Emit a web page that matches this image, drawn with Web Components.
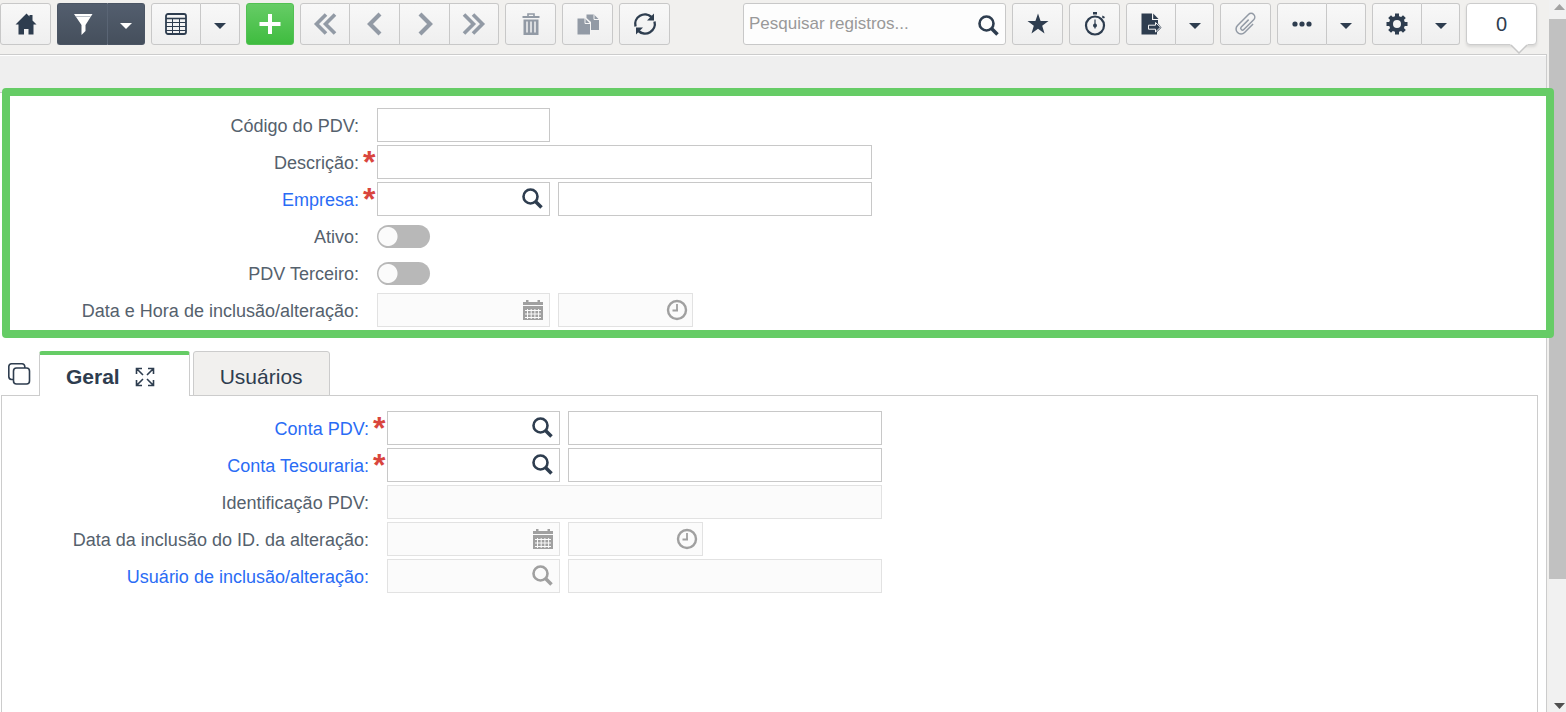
<!DOCTYPE html>
<html lang="pt-BR">
<head>
<meta charset="utf-8">
<title>Cadastro de PDV</title>
<style>
  body {
    margin: 0;
    background: #f1f1f1;
    color: #2e3d4f;
    font-family: "Liberation Sans", Arial, sans-serif;
  }
</style>
</head>
<body>
<app-shell>
  <tool-bar slot="toolbar">
    <tool-button icon="home" label="Início"></tool-button>
    <tool-button icon="filter" label="Filtro" tone="dark" menu></tool-button>
    <tool-button icon="grid" label="Modo grade" menu="wide"></tool-button>
    <tool-button icon="plus" label="Novo" tone="green"></tool-button>
    <nav-buttons></nav-buttons>
    <tool-button icon="trash" label="Excluir" muted></tool-button>
    <tool-button icon="duplicate" label="Duplicar" muted></tool-button>
    <tool-button icon="refresh" label="Atualizar"></tool-button>

    <search-box slot="right"></search-box>
    <tool-button slot="right" icon="star" label="Favoritos"></tool-button>
    <tool-button slot="right" icon="timer" label="Tempo"></tool-button>
    <tool-button slot="right" icon="export" label="Exportar" menu></tool-button>
    <tool-button slot="right" icon="clip" label="Anexos" muted></tool-button>
    <tool-button slot="right" icon="dots" label="Mais opções" menu="wide"></tool-button>
    <tool-button slot="right" icon="gear" label="Configurações" menu></tool-button>
    <count-bubble slot="right">0</count-bubble>
  </tool-bar>

  <form-section highlight>
    <form-row label="Código do PDV:" fields="short"></form-row>
    <form-row label="Descrição:" fields="full" required></form-row>
    <form-row label="Empresa:" fields="search medium" required link></form-row>
    <form-row label="Ativo:" fields="toggle"></form-row>
    <form-row label="PDV Terceiro:" fields="toggle"></form-row>
    <form-row label="Data e Hora de inclusão/alteração:" fields="calendar clock" disabled></form-row>
  </form-section>

  <tab-strip>
    <tab-item active>Geral</tab-item>
    <tab-item>Usuários</tab-item>
  </tab-strip>

  <form-section panel>
    <form-row label="Conta PDV:" fields="search medium" required link></form-row>
    <form-row label="Conta Tesouraria:" fields="search medium" required link></form-row>
    <form-row label="Identificação PDV:" fields="full" disabled></form-row>
    <form-row label="Data da inclusão do ID. da alteração:" fields="calendar clock" disabled></form-row>
    <form-row label="Usuário de inclusão/alteração:" fields="search medium" disabled link></form-row>
  </form-section>

  <scroll-rail slot="rail"></scroll-rail>
</app-shell>

<script>
// All icons share a 22x22 box and take their colour from the text around them
const ICONS = {
  home: '<path d="M11.5 0.5 0.5 11.5H3.5V21.5H9V16H13.5V21.5H18.5V11.5H21.5L17.5 7.5V2H14.5V3.5Z"/>',
  filter: '<path d="M2 1H20.500L13.500 12V18L9.500 22V12Z"/><path d="M4 3.500H18.500" stroke="#b9bfc7" stroke-width="1"/>',
  grid: '<rect x="1" y="1" width="20" height="20" rx="2" fill="none" stroke="currentColor" stroke-width="1.800"/><path d="M1 5.500H21" stroke="currentColor" stroke-width="1.600"/><path d="M1 9.500H21M1 13.500H21M1 17.500H21M7.500 5.500V21M14.500 5.500V21" fill="none" stroke="currentColor" stroke-width="1"/>',
  plus: '<path d="M9 1H13V9H21.500V13H13V21H9V13H0.500V9H9Z"/>',
  first: '<path d="M12 1.500 2.500 11 12 20.500M21 1.500 11.500 11 21 20.500" fill="none" stroke="currentColor" stroke-width="3.600"/>',
  prev: '<path d="M16 1 6 11 16 21" fill="none" stroke="currentColor" stroke-width="4.200"/>',
  next: '<path d="M6 1 16 11 6 21" fill="none" stroke="currentColor" stroke-width="4.200"/>',
  last: '<path d="M1 1.500 10.500 11 1 20.500M10 1.500 19.500 11 10 20.500" fill="none" stroke="currentColor" stroke-width="3.600"/>',
  trash: '<path d="M8 3.500V1H14V3.500" fill="none" stroke="currentColor" stroke-width="1.600"/><path d="M2.500 3H19.500V5H2.500Z"/><path d="M3.500 6.500H18.500V22H3.500Z"/><path d="M7 8.500V19.500M11 8.500V19.500M15 8.500V19.500" stroke="#f4f4f4" stroke-width="1.500"/>',
  duplicate: '<path d="M9.500 1.500H17L22 6.500V17H14V9L9.500 5Z"/><path d="M17 1.500V6.500H22" fill="none" stroke="#f4f4f4"/><path d="M0.500 5.500H8L13 10.500V21.500H0.500Z"/><path d="M8 5V10.500H13.500V22" fill="none" stroke="#f4f4f4"/>',
  refresh: '<path d="M1.500 13.500A9.700 9.700 0 0 1 17.500 4M20.500 8.500A9.700 9.700 0 0 1 4.500 18" fill="none" stroke="currentColor" stroke-width="2.400"/><path d="M20 0.500V7.500H13Z"/><path d="M2 21.500V14.500H9Z"/>',
  search: '<circle cx="8.500" cy="8.500" r="7" fill="none" stroke="currentColor" stroke-width="2.600"/><path d="M13.500 13.500 19.500 19.500" stroke="currentColor" stroke-width="3.600"/>',
  star: '<path d="M11 0.500 13.600 8H21.500L15.200 12.700 17.500 20.500 11 15.800 4.500 20.500 6.800 12.700 0.500 8H8.400Z"/>',
  timer: '<circle cx="11" cy="12.500" r="9" fill="none" stroke="currentColor" stroke-width="2.200"/><path d="M9-1H13V1.500H9ZM18.500 2.500 21 4 20 5.500 18 4.500Z"/><path d="M11 6.500V15.500" stroke="currentColor" stroke-width="1.200"/><circle cx="11" cy="12.500" r="2"/>',
  export: '<path d="M1.500 0.500H12V7H18V10.500L21.500 14.500 17 19V21.500H1.500Z"/><path d="M13.200 0.500 18.500 6H13.200Z"/><path d="M8.500 12.200H15.500V9.500L20.500 14.200 15.500 19V16.200H8.500Z" stroke="#f4f4f4" stroke-width="1"/>',
  clip: '<path transform="rotate(45 11 11)" d="M16 6V18A5 5 0 0 1 6 18V2.500A3.700 3.700 0 0 1 13.400 2.500V16.500A1.800 1.800 0 0 1 9.800 16.500V6" fill="none" stroke="currentColor" stroke-width="1.500"/>',
  dots: '<circle cx="4" cy="11" r="2.600"/><circle cx="11" cy="11" r="2.600"/><circle cx="18" cy="11" r="2.600"/>',
  gear: '<g stroke="currentColor" stroke-width="4"><path d="M11 0.500V5M11 17V21.500M0.500 11H5M17 11H21.500M3.600 3.600 7 7M15 15 18.400 18.400M18.400 3.600 15 7M7 15 3.600 18.400"/></g><circle cx="11" cy="11" r="6" fill="none" stroke="currentColor" stroke-width="4"/>',
  caret: '<path d="M5 10H17L11 16Z"/>',
  calendar: '<path d="M1 3H4V1H6.500V3H15.500V1H18V3H21V6H1Z"/><path d="M1 7H21V21H1Z"/><path d="M3 11.500H19M3 15H19M3 18.500H19M5.500 10V20M9.200 10V20M12.900 10V20M16.600 10V20" stroke="#fbfbfb" stroke-width="1"/>',
  clock: '<circle cx="11" cy="11" r="9" fill="none" stroke="currentColor" stroke-width="2.400"/><path d="M11 5V12.500M6.500 11.500H12" stroke="currentColor" stroke-width="1.800"/>',
  windows: '<path d="M5 16.500H3.500A3 3 0 0 1 0.800 13.500V3.500A3 3 0 0 1 3.500 0.800H14A3 3 0 0 1 16.800 3.500V5" fill="none" stroke="currentColor" stroke-width="1.600"/><rect x="5.500" y="5" width="16" height="16" rx="3" fill="none" stroke="currentColor" stroke-width="1.600"/>',
  expand: '<path d="M2.500 8V2.500H8M14 2.500H19.500V8M19.500 14V19.500H14M8 19.500H2.500V14M3 3 9 9M19 3 13 9M19 19 13 13M3 19 9 13" fill="none" stroke="currentColor" stroke-width="1.600"/>'
};

function icon (name) {
  return `<svg width="22" height="22" viewBox="0 0 22 22" fill="currentColor" overflow="visible" aria-hidden="true">${ICONS[name]}</svg>`;
}

class AppShell extends HTMLElement {
  constructor () {
    super();
    this.attachShadow({ mode: 'open' }).innerHTML = `
    <style>
      :host {
        display: flex;
        min-height: 100vh;
      }
      .page {
        flex: 1;
        min-width: 0;
        display: flex;
        flex-direction: column;
        background: #f1f0ee;
      }
      main {
        flex: 1;
        display: flex;
        flex-direction: column;
        margin-right: 2px;
        border-top: 1px solid #ccc;
        border-right: 1px solid #ccc;
        background: #fff;
      }
      .band {
        height: 36px;
        margin-top: 1px;
        background: #efefef;
        border-bottom: 1px solid #ccc;
      }
    </style>
    <div class="page">
      <slot name="toolbar"></slot>
      <main>
        <div class="band"></div>
        <slot></slot>
      </main>
    </div>
    <slot name="rail"></slot>`;
  }
}

class ToolBar extends HTMLElement {
  constructor () {
    super();
    this.attachShadow({ mode: 'open' }).innerHTML = `
    <style>
      :host {
        display: flex;
        justify-content: space-between;
        padding: 3px 12px 9px 0;
      }
      div {
        display: flex;
        gap: 6px;
      }
    </style>
    <div><slot></slot></div>
    <div><slot name="right"></slot></div>`;
  }
}

const BUTTON_STYLE = `
  :host {
    display: flex;
    color: #2e3d4f;
  }
  button {
    display: flex;
    align-items: center;
    justify-content: center;
    box-sizing: border-box;
    width: 50px;
    height: 42px;
    padding: 0;
    color: inherit;
    background: linear-gradient(#f8f8f8, #efefef);
    border: 1px solid #c8c8c8;
    cursor: pointer;
  }
  button + button {
    border-left: 0;
  }
  button:first-of-type {
    border-top-left-radius: 3px;
    border-bottom-left-radius: 3px;
  }
  button:last-of-type {
    border-top-right-radius: 3px;
    border-bottom-right-radius: 3px;
  }
`;

class ToolButton extends HTMLElement {
  connectedCallback () {
    const label = this.getAttribute('label');
    const menu = this.hasAttribute('menu')
      ? `<button type="button" class="menu" aria-label="${label}: opções">${icon('caret')}</button>`
      : '';
    this.attachShadow({ mode: 'open' }).innerHTML = `
    <style>
      ${BUTTON_STYLE}
      :host([muted]) { color: #929aa5; }
      :host([tone]) { color: #fff; }
      button:only-of-type { width: 51px; }
      button.menu { width: 38px; }
      :host([menu="wide"]) .menu { width: 39px; }
      :host([tone="dark"]) button {
        background: linear-gradient(#535e6e, #454f5c);
        border-color: #4b5564;
      }
      :host([tone="dark"]) button:first-of-type {
        border-right: 0;
      }
      :host([tone="dark"]) .menu {
        border-left: 1px solid #5a6575;
      }
      :host([tone="green"]) button {
        width: 48px;
        background: linear-gradient(#66cc66, #3fbc3f);
        border-color: #52c152;
      }
    </style>
    <button type="button" aria-label="${label}">${icon(this.getAttribute('icon'))}</button>${menu}`;
  }
}

class NavButtons extends HTMLElement {
  constructor () {
    super();
    this.attachShadow({ mode: 'open' }).innerHTML = `
    <style>
      ${BUTTON_STYLE}
      :host { color: #929aa5; }
      button:last-of-type { width: 49px; }
    </style>
    <button type="button" aria-label="Primeiro">${icon('first')}</button>
    <button type="button" aria-label="Anterior">${icon('prev')}</button>
    <button type="button" aria-label="Próximo">${icon('next')}</button>
    <button type="button" aria-label="Último">${icon('last')}</button>`;
  }
}

class SearchBox extends HTMLElement {
  constructor () {
    super();
    this.attachShadow({ mode: 'open' }).innerHTML = `
    <style>
      :host {
        display: flex;
        align-items: center;
        box-sizing: border-box;
        width: 263px;
        height: 42px;
        padding: 0 5px;
        background: #fdfdfd;
        border: 1px solid #c8c8c8;
        border-radius: 3px;
      }
      input {
        flex: 1;
        min-width: 0;
        padding: 0;
        border: 0;
        outline: 0;
        background: none;
        font: 17px "Liberation Sans", Arial, sans-serif;
      }
      input::placeholder { color: #999; }
      button {
        display: flex;
        padding: 3px 0 0;
        border: 0;
        background: none;
        color: #2e3d4f;
      }
    </style>
    <input type="text" placeholder="Pesquisar registros..." aria-label="Pesquisar registros">
    <button type="button" aria-label="Pesquisar">${icon('search')}</button>`;
  }
}

class CountBubble extends HTMLElement {
  constructor () {
    super();
    this.attachShadow({ mode: 'open' }).innerHTML = `
    <style>
      :host {
        position: relative;
        display: flex;
        align-items: center;
        justify-content: center;
        box-sizing: border-box;
        width: 71px;
        height: 42px;
        font-size: 20px;
        background: #fff;
        border: 1px solid #ccc;
        border-radius: 4px;
        box-shadow: 0 2px 3px rgba(0, 0, 0, 0.1);
      }
      svg {
        position: absolute;
        right: 8px;
        top: 40px;
      }
    </style>
    <slot></slot>
    <svg width="18" height="10" viewBox="0 0 18 10"><path d="M0 0H18L9 9Z" fill="#fff"/><path d="M1 1 9 9 17 1" fill="none" stroke="#c8c8c8" stroke-width="1.500"/></svg>`;
  }
}

class FormSection extends HTMLElement {
  constructor () {
    super();
    this.attachShadow({ mode: 'open' }).innerHTML = `
    <style>
      :host {
        display: flex;
        flex-direction: column;
        gap: 3px;
        background: #fff;
      }
      /* the green frame runs over the band above and the scroll rail */
      :host([highlight]) {
        position: relative;
        margin: -5px -8px 13px 2px;
        padding: 12px 0 3px;
        border: 8px solid #66cc66;
        border-radius: 4px;
      }
      :host([panel]) {
        flex: 1;
        margin: -1px 8px 0 1px;
        padding: 15px 0 0 18px;
        border: 1px solid #ccc;
        border-bottom: 0;
      }
    </style>
    <slot></slot>`;
  }
}

class FormRow extends HTMLElement {
  connectedCallback () {
    const text = this.getAttribute('label');
    const caption = this.hasAttribute('link') ? `<a href="#">${text}</a>` : text;
    const off = this.hasAttribute('disabled') ? 'disabled' : '';
    const fields = this.getAttribute('fields').split(' ').map((kind, i) => {
      const id = i === 0 ? 'id="field"' : `aria-label="${text} complemento"`;
      if (kind === 'toggle') {
        return `<input type="checkbox" role="switch" ${id}>`;
      }
      const button = ICONS[kind]
        ? `<button type="button" aria-label="${text} selecionar" ${off}>${icon(kind)}</button>`
        : '';
      return `<div class="box ${kind}"><input type="text" ${id} ${off}>${button}</div>`;
    }).join('');

    this.attachShadow({ mode: 'open' }).innerHTML = `
    <style>
      :host {
        display: grid;
        grid-template-columns: 349px 18px 1fr;
        align-items: center;
        height: 34px;
        color: #55616d;
        font-size: 18px;
      }
      label {
        padding-top: 2px;
        text-align: right;
      }
      a {
        color: #2a6cf5;
        text-decoration: none;
      }
      .mark {
        height: 34px;
        padding-left: 4px;
        color: #d9453d;
        font-size: 32px;
        font-weight: bold;
        line-height: 34px;
      }
      .fields {
        display: flex;
        gap: 8px;
      }
      .box {
        display: flex;
        align-items: center;
        box-sizing: border-box;
        width: 173px;
        height: 34px;
        padding: 0 5px;
        background: #fff;
        border: 1px solid #c8c8c8;
      }
      .full { width: 495px; }
      .medium { width: 314px; }
      .clock {
        width: 135px;
        padding-right: 4px;
      }
      :host([disabled]) .box {
        background: #fbfbfb;
        border-color: #e2e2e2;
      }
      .box input {
        flex: 1;
        min-width: 0;
        padding: 0;
        border: 0;
        outline: 0;
        background: none;
        font: inherit;
      }
      button {
        display: flex;
        padding: 0;
        border: 0;
        background: none;
        color: #2e3d4f;
      }
      button:disabled { color: #a0a0a0; }
      input[type=checkbox] {
        appearance: none;
        width: 53px;
        height: 23px;
        margin: 0;
        border-radius: 12px;
        background: radial-gradient(circle at 11px 50%, #fbfbfb 9px, #b8b8b8 10px);
      }
      input[type=checkbox]:checked {
        background: radial-gradient(circle at 42px 50%, #fbfbfb 9px, #66cc66 10px);
      }
    </style>
    <label for="field">${caption}</label>
    <span class="mark">${this.hasAttribute('required') ? '*' : ''}</span>
    <div class="fields">${fields}</div>`;
  }
}

class TabStrip extends HTMLElement {
  constructor () {
    super();
    this.attachShadow({ mode: 'open' }).innerHTML = `
    <style>
      :host {
        position: relative;
        z-index: 1;
        display: flex;
        gap: 3px;
      }
      button {
        display: flex;
        align-items: center;
        width: 36px;
        padding: 0 0 0 8px;
        border: 0;
        background: none;
        color: #2e3d4f;
      }
    </style>
    <button type="button" aria-label="Abas">${icon('windows')}</button>
    <slot></slot>`;
  }
}

class TabItem extends HTMLElement {
  connectedCallback () {
    const extra = this.hasAttribute('active') ? icon('expand') : '';
    this.attachShadow({ mode: 'open' }).innerHTML = `
    <style>
      :host { display: flex; }
      button {
        display: flex;
        align-items: center;
        gap: 14px;
        box-sizing: border-box;
        height: 45px;
        padding: 6px 26px 0;
        color: #2e3d4f;
        font: 21px "Liberation Sans", Arial, sans-serif;
        background: #f1f0ee;
        border: 1px solid #ccc;
        border-radius: 3px 3px 0 0;
      }
      :host([active]) button {
        padding: 3px 33px 0 26px;
        font-weight: bold;
        background: #fff;
        border-top: 4px solid #66cc66;
        border-bottom: 0;
      }
    </style>
    <button type="button"><slot></slot>${extra}</button>`;
  }
}

class ScrollRail extends HTMLElement {
  constructor () {
    super();
    this.attachShadow({ mode: 'open' }).innerHTML = `
    <style>
      :host {
        display: flex;
        flex-direction: column;
        width: 17px;
        background: #f1f1f1;
      }
      .thumb {
        flex: 560;
        background: #c1c1c1;
      }
      .rest { flex: 116; }
      svg { display: block; }
    </style>
    <svg width="17" height="19"><path d="M5 10 10.500 4 16 10Z" fill="#a3a3a3"/></svg>
    <div class="thumb"></div>
    <div class="rest"></div>
    <svg width="17" height="17"><path d="M5 8 10.500 14 16 8Z" fill="#505050"/></svg>`;
  }
}

customElements.define('app-shell', AppShell);
customElements.define('tool-bar', ToolBar);
customElements.define('tool-button', ToolButton);
customElements.define('nav-buttons', NavButtons);
customElements.define('search-box', SearchBox);
customElements.define('count-bubble', CountBubble);
customElements.define('form-section', FormSection);
customElements.define('form-row', FormRow);
customElements.define('tab-strip', TabStrip);
customElements.define('tab-item', TabItem);
customElements.define('scroll-rail', ScrollRail);
</script>
</body>
</html>
